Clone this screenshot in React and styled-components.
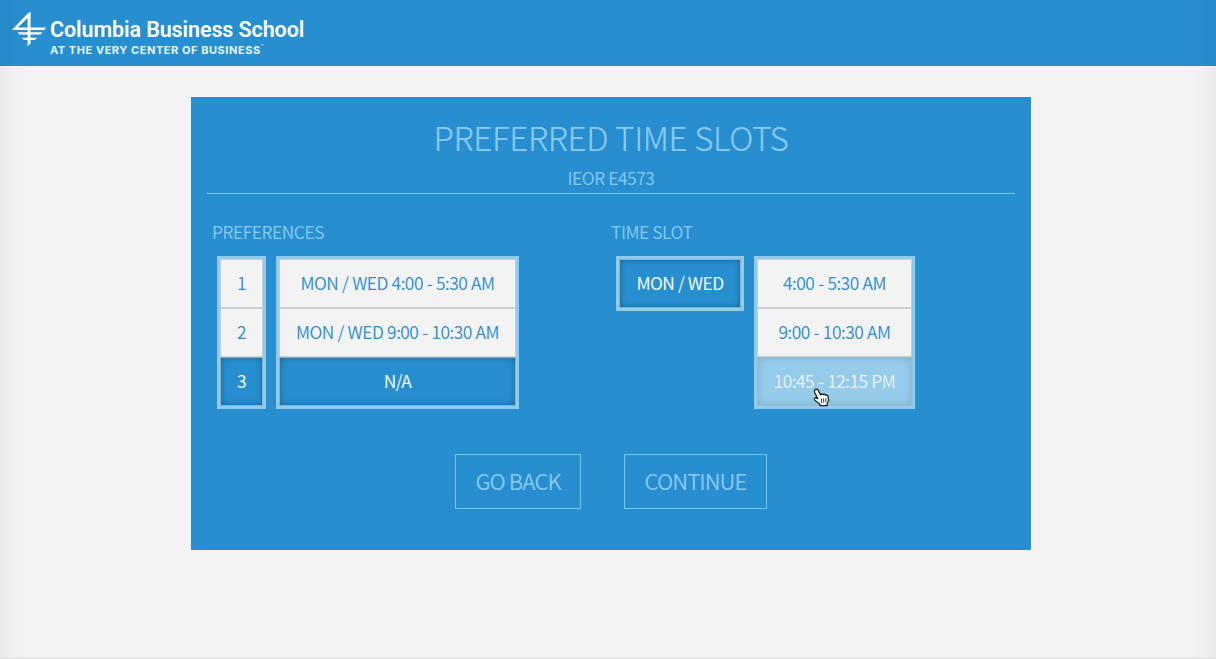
import React from "react";
import styled, { createGlobalStyle } from "styled-components";

const GlobalStyle = createGlobalStyle`
  * { box-sizing: border-box; }
  html, body { margin: 0; padding: 0; overflow: hidden; }
  body {
    background: #f3f3f3;
    font-family: "Noto Sans CJK SC", "Noto Sans", sans-serif;
    font-weight: 300;
  }
`;

const Page = styled.div`
  position: relative;
  height: 659px;
  display: flex;
  flex-direction: column;
  align-items: center;
  background: #f3f3f3;
`;

const EdgeShade = styled.div`
  position: absolute;
  inset: 0;
  pointer-events: none;
  border-bottom: 2px solid #e6e6e6;
  background:
    linear-gradient(to right, rgba(0, 0, 0, 0.035), rgba(0, 0, 0, 0.01) 14px, rgba(0, 0, 0, 0) 30px),
    linear-gradient(to left, rgba(0, 0, 0, 0.035), rgba(0, 0, 0, 0.01) 14px, rgba(0, 0, 0, 0) 30px);
`;

const Header = styled.header`
  align-self: stretch;
  height: 66px;
  flex: none;
  display: flex;
  padding: 11px 0 0 11px;
  background: #278ecf;
`;

const BrandText = styled.div`
  display: flex;
  flex-direction: column;
  margin-left: 3px;
  padding-top: 7px;
  color: #fff;
  white-space: nowrap;
`;

const BrandName = styled.div`
  font: 600 21.5px/24px Roboto, sans-serif;
  letter-spacing: ${(p) => p.$spacing};
`;

const Tagline = styled.div`
  display: flex;
  padding-top: 1px;
  font: 700 11px/14px Inter, sans-serif;
  letter-spacing: ${(p) => p.$spacing};
  color: #e6f6ff;
`;

const Mark = styled.span`
  font-size: 4px;
  line-height: 8px;
`;

const Panel = styled.main`
  width: 840px;
  height: 453px;
  margin: 31px 0 0 6px;
  padding: 16px;
  background: #278ecf;
  color: #8ccbf2;
`;

const Heading = styled.header`
  height: 81px;
  border-bottom: 1px solid #74caf0;
  text-align: center;
`;

const Title = styled.h1`
  margin: 0;
  font-size: 33.2px;
  line-height: 48px;
  padding-bottom: 4px;
  font-weight: 300;
  letter-spacing: ${(p) => p.$spacing};
  -webkit-text-stroke: 0.2px #8ccbf2;
`;

const Course = styled.div`
  font-size: 17.4px;
  line-height: 26px;
  font-weight: 350;
  letter-spacing: ${(p) => p.$spacing};
`;

const Columns = styled.div`
  display: flex;
  padding: 25px 0 0 5px;
  height: 244px;
`;

const Column = styled.section`
  width: 399px;
`;

const Label = styled.h2`
  margin: 0;
  font-size: 17.4px;
  line-height: 26px;
  font-weight: 350;
  letter-spacing: ${(p) => p.$spacing};
`;

const Groups = styled.div`
  display: flex;
  align-items: flex-start;
  gap: 10px;
  padding: 11px 0 0 5px;
`;

const Group = styled.div`
  width: ${(p) => p.$width}px;
  border: 3px solid #90cbec;
`;

const looks = {
  plain: { bg: "#f3f3f3", ink: "#278ecf", line: "#c8cfd2", shade: "none", weight: 350 },
  active: { bg: "#278ecf", ink: "#f2f9fe", line: "#94aebb", shade: "inset 0 0 6px rgba(0, 30, 60, 0.35)", weight: 400 },
  hover: { bg: "#96cbe9", ink: "#e9f6fd", line: "#9dbccb", shade: "inset 0 0 7px rgba(40, 100, 140, 0.25)", weight: 350 },
};

const Option = styled.button`
  display: block;
  width: 100%;
  height: 49px;
  padding: 0 0 1px;
  border: 1px solid ${(p) => looks[p.$look].line};
  border-radius: 0;
  background: ${(p) => looks[p.$look].bg};
  box-shadow: ${(p) => looks[p.$look].shade};
  color: ${(p) => looks[p.$look].ink};
  font: ${(p) => looks[p.$look].weight} 17.4px/26px "Noto Sans CJK SC", sans-serif;
  letter-spacing: ${(p) => (p.$look === "active" ? "-0.6px" : "-0.5px")};
  word-spacing: 0.4px;
  white-space: nowrap;
`;

const Actions = styled.div`
  display: flex;
  justify-content: center;
  gap: 43px;
  padding-top: 16px;
`;

const Action = styled.button`
  width: ${(p) => p.$width}px;
  height: 55px;
  padding: 0 0 3px;
  border: 1px solid #74caf0;
  background: none;
  color: #8ccbf2;
  font: 350 22px/32px "Noto Sans CJK SC", sans-serif;
  letter-spacing: ${(p) => p.$spacing};
`;

const Pointer = styled.svg`
  position: absolute;
  left: 813px;
  top: 388px;
`;

const Logo = () => (
  <svg width="36" height="36" viewBox="11 11 36 36" fill="#fff">
    <path fillRule="evenodd" d="M30.6 11.8V27.5H46.2L44.3 29.9H12L27.7 13.4ZM27.6 17.9L17.8 27.5H27.6Z" />
    <path d="M17.4 32.2H42.2L40.6 34.4H19.5ZM21.8 37.7H36.8L35 40H23.8Z" />
    <path d="M27.6 28H30.6V43.6L27.6 46.3Z" />
  </svg>
);

const preferences = ["MON / WED 4:00 - 5:30 AM", "MON / WED 9:00 - 10:30 AM", "N/A"];
const times = ["4:00 - 5:30 AM", "9:00 - 10:30 AM", "10:45 - 12:15 PM"];

export default function App() {
  return (
    <>
      <GlobalStyle />
      <Page>
        <Header>
          <Logo />
          <BrandText>
            <BrandName $spacing="-0.1px">Columbia Business School</BrandName>
            <Tagline $spacing="0.55px">
              AT THE VERY CENTER OF BUSINESS<Mark>™</Mark>
            </Tagline>
          </BrandText>
        </Header>
        <Panel>
          <Heading>
            <Title $spacing="-0.36px">PREFERRED TIME SLOTS</Title>
            <Course $spacing="-0.42px">IEOR E4573</Course>
          </Heading>
          <Columns>
            <Column>
              <Label $spacing="-0.42px">PREFERENCES</Label>
              <Groups>
                <Group $width={49}>
                  {preferences.map((_, i) => (
                    <Option key={i} $look={i === 2 ? "active" : "plain"}>{i + 1}</Option>
                  ))}
                </Group>
                <Group $width={243}>
                  {preferences.map((text, i) => (
                    <Option key={text} $look={i === 2 ? "active" : "plain"}>{text}</Option>
                  ))}
                </Group>
              </Groups>
            </Column>
            <Column>
              <Label $spacing="-0.42px">TIME SLOT</Label>
              <Groups>
                <Group $width={128}>
                  <Option $look="active">MON / WED</Option>
                </Group>
                <Group $width={161}>
                  {times.map((text, i) => (
                    <Option key={text} $look={i === 2 ? "hover" : "plain"}>{text}</Option>
                  ))}
                </Group>
              </Groups>
            </Column>
          </Columns>
          <Actions>
            <Action $width={126} $spacing="-0.9px">GO BACK</Action>
            <Action $width={143} $spacing="-0.9px">CONTINUE</Action>
          </Actions>
        </Panel>
        <EdgeShade />
        <Pointer width="17" height="19" viewBox="0 0 17 19">
          <path
            d="M1.8 2C3 .6 4.8 1.2 5.4 2.6L7.4 6.8C8.2 5.7 9.5 5.8 10 6.8C11 5.8 12.3 6.2 12.6 7.2C13.8 6.6 15 7.4 15.1 8.8L15.6 12.5L14.2 15.2V17.6H7.3L6.3 15.5L2 12.5C.7 11.2 1.6 9.3 3.2 9.8L4.8 10.6L1.7 4.5C1.3 3.6 1.2 2.7 1.8 2Z"
            fill="#fff" stroke="#222" strokeWidth="1.3" strokeLinejoin="round"
          />
          <path d="M8.5 10.5V14.8M10.6 10.3V14.6M12.7 10.1V14.4" stroke="#333" strokeWidth="0.9" />
        </Pointer>
      </Page>
    </>
  );
}
